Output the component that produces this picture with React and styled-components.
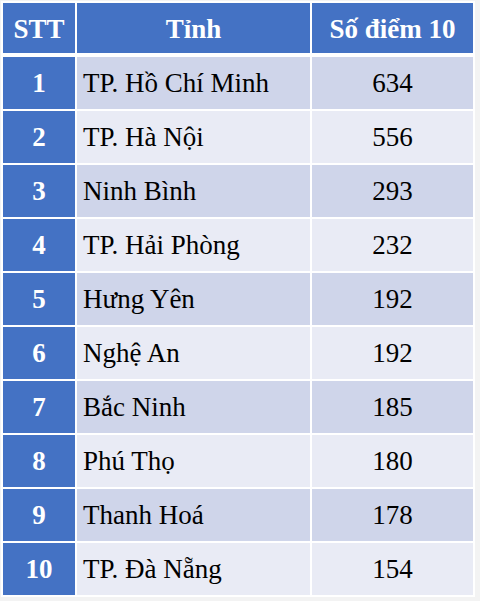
import React from 'react';
import styled, { createGlobalStyle } from 'styled-components';

const rows = [
    ['1', 'TP. Hồ Chí Minh', '634'],
    ['2', 'TP. Hà Nội', '556'],
    ['3', 'Ninh Bình', '293'],
    ['4', 'TP. Hải Phòng', '232'],
    ['5', 'Hưng Yên', '192'],
    ['6', 'Nghệ An', '192'],
    ['7', 'Bắc Ninh', '185'],
    ['8', 'Phú Thọ', '180'],
    ['9', 'Thanh Hoá', '178'],
    ['10', 'TP. Đà Nẵng', '154'],
];

const GlobalStyle = createGlobalStyle`
    html, body {
        margin: 0;
        padding: 0;
        background: #f3f3f3;
    }
`;

const Sheet = styled.div`
    display: grid;
    grid-template-columns: 72px 233px 161px;
    gap: 2px;
    padding: 2px;
    margin: 1px;
    width: fit-content;
    background: #ffffff;
    font-family: 'Liberation Serif', 'Times New Roman', serif;
    font-size: 27px;
    color: #000;
`;

const HeadCell = styled.div`
    display: flex;
    align-items: center;
    justify-content: center;
    height: 47px;
    padding-top: 3px;
    background: #4472c4;
    color: #fff;
    font-weight: 700;
    border-bottom: 2px solid #fff;
`;

const NumCell = styled.div`
    display: flex;
    align-items: center;
    justify-content: center;
    height: 52px;
    background: #4472c4;
    color: #fff;
    font-weight: 700;
`;

const Cell = styled.div`
    display: flex;
    align-items: center;
    justify-content: ${(p) => (p.center ? 'center' : 'flex-start')};
    padding-left: ${(p) => (p.center ? 0 : 6)}px;
    background: ${(p) => (p.odd ? '#cfd5ea' : '#e9ebf5')};
`;

export default function App() {
    return (
        <>
            <GlobalStyle />
            <Sheet>
                <HeadCell>STT</HeadCell>
                <HeadCell>Tỉnh</HeadCell>
                <HeadCell>Số điểm 10</HeadCell>
                {rows.map((r, i) => (
                    <React.Fragment key={r[0]}>
                        <NumCell>{r[0]}</NumCell>
                        <Cell odd={i % 2 === 0}>{r[1]}</Cell>
                        <Cell odd={i % 2 === 0} center>
                            {r[2]}
                        </Cell>
                    </React.Fragment>
                ))}
            </Sheet>
        </>
    );
}
